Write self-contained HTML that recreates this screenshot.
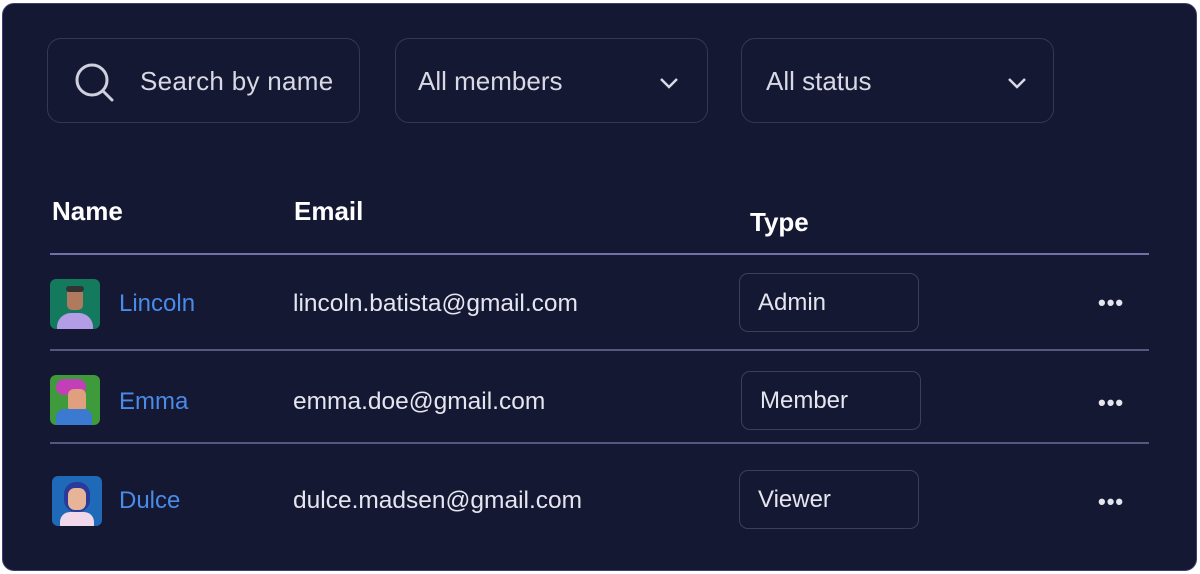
<!DOCTYPE html>
<html><head><style>
body{margin:0;width:1200px;height:574px;background:#fff;font-family:"Liberation Sans",sans-serif;position:relative;overflow:hidden}
.card{position:absolute;left:2px;top:3px;width:1195px;height:568px;background:#141833;border-radius:12px;border:1px solid #3a4070;box-sizing:border-box}
.box{position:absolute;top:38px;height:85px;border:1px solid #33385a;border-radius:14px;box-sizing:border-box;color:#d8d9e4;font-size:26px;line-height:85px}
.t{position:absolute;color:#e4e5ee;font-size:24.5px}
.h{position:absolute;color:#fff;font-size:26px;font-weight:bold}
.line{position:absolute;left:50px;width:1099px;height:2px}
.av{position:absolute;left:50px;width:50px;height:50px;border-radius:6px;overflow:hidden}
.nm{position:absolute;left:119px;color:#4a8ae8;font-size:24px}
.pill{position:absolute;left:739px;width:180px;height:59px;border:1px solid #3a3f60;border-radius:9px;box-sizing:border-box;color:#e4e5ee;font-size:24px;line-height:57px;padding-left:18px}
.dots{position:absolute;left:1098px;color:#e4e5ee;font-size:22px;letter-spacing:1px;font-weight:bold}
</style></head><body>
<div class="card"></div>
<div class="box" style="left:47px;width:313px">
<svg style="position:absolute;left:24px;top:22px" width="42" height="42" viewBox="0 0 42 42"><circle cx="20" cy="19" r="15" fill="none" stroke="#cfd0dc" stroke-width="3"/><line x1="31" y1="30" x2="40" y2="39" stroke="#cfd0dc" stroke-width="3" stroke-linecap="round"/></svg>
<span style="position:absolute;left:92px;letter-spacing:0.3px">Search by name</span></div>
<div class="box" style="left:395px;width:313px"><span style="position:absolute;left:22px">All members</span>
<svg style="position:absolute;left:262px;top:37px" width="22" height="14"><path d="M3 3l8 8 8-8" fill="none" stroke="#d8d9e4" stroke-width="2.5"/></svg></div>
<div class="box" style="left:741px;width:313px"><span style="position:absolute;left:24px">All status</span>
<svg style="position:absolute;left:264px;top:37px" width="22" height="14"><path d="M3 3l8 8 8-8" fill="none" stroke="#d8d9e4" stroke-width="2.5"/></svg></div>

<div class="h" style="left:52px;top:196px">Name</div>
<div class="h" style="left:294px;top:196px">Email</div>
<div class="h" style="left:750px;top:207px">Type</div>
<div class="line" style="top:253px;background:#6f72a8"></div>
<div class="line" style="top:349px;background:#55587e"></div>
<div class="line" style="top:442px;background:#55587e"></div>

<div class="av" style="top:279px;background:#137a5e"><div style="position:absolute;left:7px;top:34px;width:36px;height:20px;background:#b39de6;border-radius:14px 14px 0 0"></div><div style="position:absolute;left:17px;top:9px;width:16px;height:22px;background:#b07a5e;border-radius:5px"></div><div style="position:absolute;left:16px;top:7px;width:18px;height:6px;background:#333;border-radius:3px"></div></div>
<div class="nm" style="top:290px">Lincoln</div>
<div class="t" style="left:293px;top:290px">lincoln.batista@gmail.com</div>
<div class="pill" style="top:273px">Admin</div>
<div class="dots" style="top:290px">•••</div>

<div class="av" style="top:375px;background:#3e9a3a"><div style="position:absolute;left:6px;top:4px;width:30px;height:16px;background:#c23fb8;border-radius:10px"></div><div style="position:absolute;left:18px;top:14px;width:18px;height:24px;background:#e0a080;border-radius:6px"></div><div style="position:absolute;left:6px;top:34px;width:36px;height:18px;background:#3a7ad0;border-radius:8px 8px 0 0"></div></div>
<div class="nm" style="top:388px">Emma</div>
<div class="t" style="left:293px;top:388px">emma.doe@gmail.com</div>
<div class="pill" style="top:371px;left:741px">Member</div>
<div class="dots" style="top:390px">•••</div>

<div class="av" style="top:476px;left:52px;background:#1e6ab8"><div style="position:absolute;left:12px;top:6px;width:26px;height:30px;background:#2a3a9a;border-radius:12px"></div><div style="position:absolute;left:16px;top:12px;width:18px;height:22px;background:#e8b498;border-radius:7px"></div><div style="position:absolute;left:8px;top:36px;width:34px;height:16px;background:#f0d8ea;border-radius:10px 10px 0 0"></div></div>
<div class="nm" style="top:487px">Dulce</div>
<div class="t" style="left:293px;top:487px">dulce.madsen@gmail.com</div>
<div class="pill" style="top:470px">Viewer</div>
<div class="dots" style="top:489px">•••</div>
</body></html>
